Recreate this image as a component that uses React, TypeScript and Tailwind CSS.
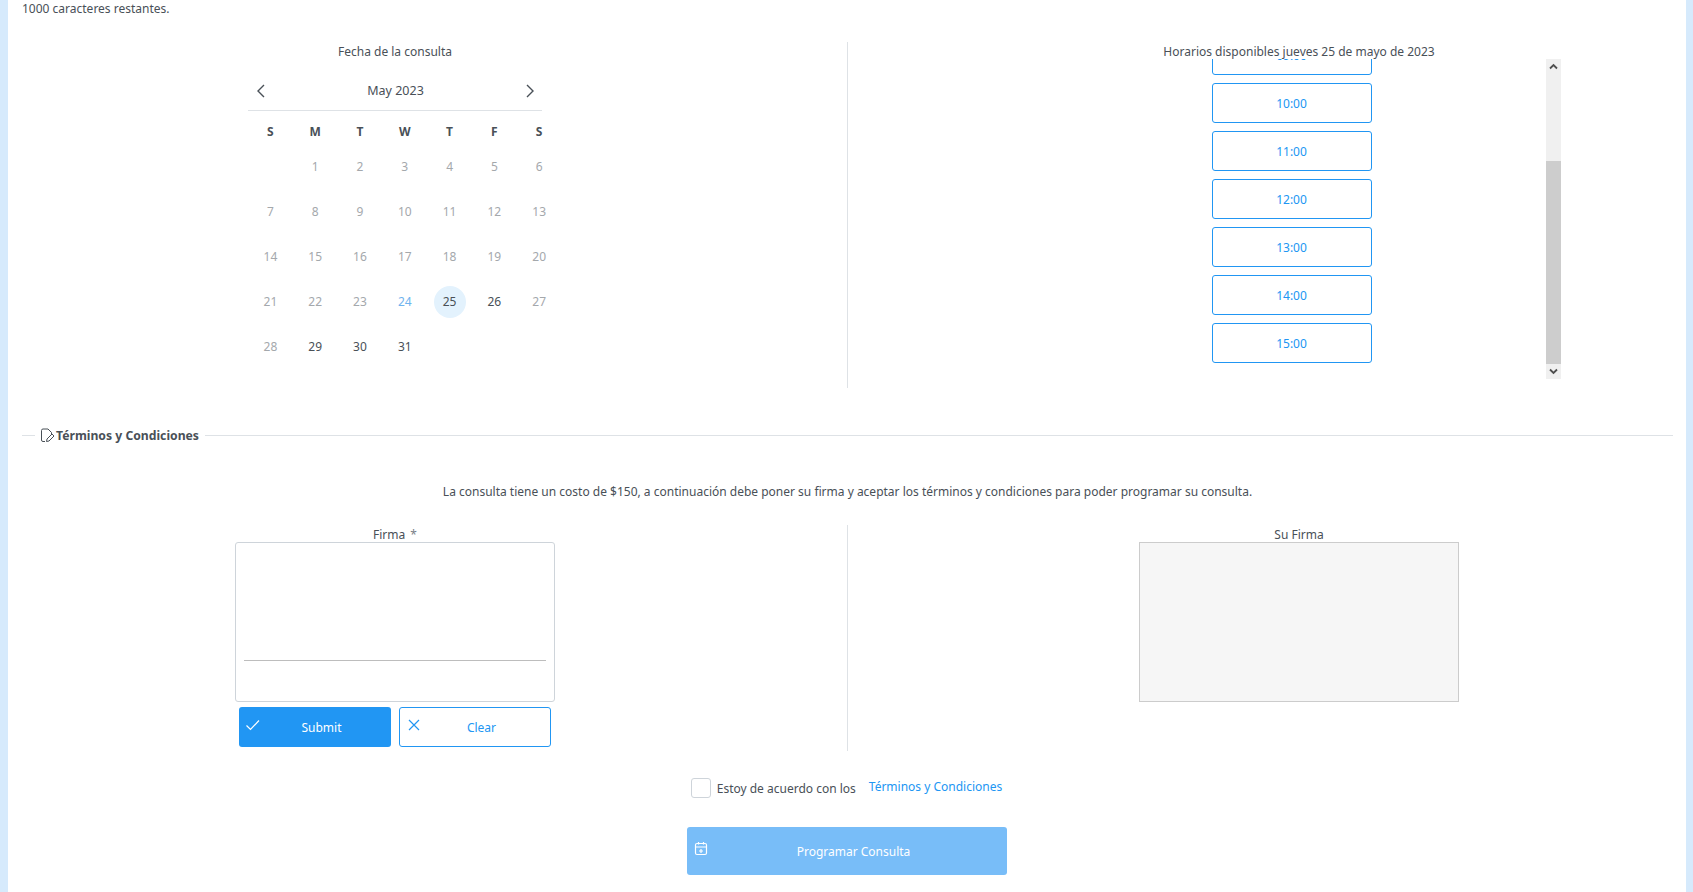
import React from "react";

const WEEK = ["S", "M", "T", "W", "T", "F", "S"];
const ROWS: (number | null)[][] = [
  [null, 1, 2, 3, 4, 5, 6],
  [7, 8, 9, 10, 11, 12, 13],
  [14, 15, 16, 17, 18, 19, 20],
  [21, 22, 23, 24, 25, 26, 27],
  [28, 29, 30, 31, null, null, null],
];

function dayClass(d: number) {
  if (d === 24) return "text-[#6fb3ee]";
  if (d === 25) return "text-[#495057] bg-[#e3f2fd] rounded-full";
  if (d === 26 || d >= 29) return "text-[#495057]";
  return "text-[#a4a8ac]";
}

function Chevron({ dir }: { dir: "left" | "right" }) {
  return (
    <svg width="10" height="14" viewBox="0 0 10 14" fill="none" stroke="#495057" strokeWidth="1.4">
      <path d={dir === "left" ? "M8 1 L2 7 L8 13" : "M2 1 L8 7 L2 13"} />
    </svg>
  );
}

function Calendar() {
  return (
    <div className="w-[294px] mx-auto">
      <div className="flex items-center justify-between h-[46px] pt-[6px] pl-[8px] pr-[7px] border-b border-[#dee2e6] text-[12.5px] text-[#495057]">
        <Chevron dir="left" />
        <span className="pt-[1px]">May 2023</span>
        <Chevron dir="right" />
      </div>
      <div className="grid grid-cols-[repeat(7,44.8px)] w-[314px] mt-[8px] text-[12px] leading-[16px]">
        {WEEK.map((w, i) => (
          <div key={i} className="h-[25px] flex items-center justify-center font-bold text-[#495057]">
            {w}
          </div>
        ))}
        {ROWS.flat().map((d, i) => (
          <div key={i} className="h-[45px] flex items-center justify-center">
            {d !== null && (
              <span className={"w-[32px] h-[32px] flex items-center justify-center " + dayClass(d)}>{d}</span>
            )}
          </div>
        ))}
      </div>
    </div>
  );
}

function Slots() {
  return (
    <div className="w-[524px] h-[320px] mx-auto -mt-[3px] flex overflow-hidden relative">
      <div className="flex-1 flex flex-col items-center gap-[8px] -mt-[24px]">
        {["09:00", "10:00", "11:00", "12:00", "13:00", "14:00", "15:00"].map((t) => (
          <button
            key={t}
            className="w-[160px] h-[40px] shrink-0 pt-[1px] border border-[#2196f3] rounded-[3px] text-[#2196f3] text-[12px] flex items-center justify-center bg-white"
          >
            {t}
          </button>
        ))}
      </div>
      <div className="w-[15px] h-[320px] bg-[#f0f0f0] flex flex-col items-center">
        <div className="h-[15px] flex items-center justify-center">
          <svg width="9" height="7" viewBox="0 0 9 7" fill="none" stroke="#505050" strokeWidth="1.8">
            <path d="M1 5.5 L4.5 2 L8 5.5" />
          </svg>
        </div>
        <div className="h-[87px]" />
        <div className="w-full h-[203px] bg-[#cdcdcd]" />
        <div className="h-[15px] flex items-center justify-center">
          <svg width="9" height="7" viewBox="0 0 9 7" fill="none" stroke="#505050" strokeWidth="1.8">
            <path d="M1 1.5 L4.5 5 L8 1.5" />
          </svg>
        </div>
      </div>
    </div>
  );
}

export default function App() {
  return (
    <div
      className="h-[892px] overflow-hidden flex bg-white text-[#495057] text-[12px]"
      style={{ fontFamily: '"Noto Sans", sans-serif' }}
    >
      <div className="w-[8px] bg-[#d6eafc] shrink-0" />
      <main className="flex-1 pl-[14px] pr-[13px]">
        <div className="h-[18px] leading-[18px]">1000 caracteres restantes.</div>

        <div className="grid grid-cols-[746px_157px_748px] h-[346px] mt-[24px]">
          <section>
            <div className="h-[20px] leading-[20px] text-center">Fecha de la consulta</div>
            <div className="mt-[3px]">
              <Calendar />
            </div>
          </section>
          <div className="flex justify-center pl-[2px]">
            <div className="w-px h-full bg-[#dee2e6]" />
          </div>
          <section>
            <div className="h-[20px] leading-[20px] text-center relative z-10">
              Horarios disponibles jueves 25 de mayo de 2023
            </div>
            <Slots />
          </section>
        </div>

        <div className="flex items-center mt-[37px] h-[20px]">
          <div className="w-[13px] h-px bg-[#dee2e6] mr-[5px]" />
          <svg width="15" height="15" viewBox="0 0 15 15" fill="none" stroke="#495057" strokeWidth="1">
            <path d="M8 1 H3 A1.5 1.5 0 0 0 1.5 2.5 V12 A1.5 1.5 0 0 0 3 13.5 H5" />
            <path d="M8 1 L11.5 4.5 V6" />
            <path d="M6.5 13.5 L7 11 L12 6 L14 8 L9 13 Z" />
          </svg>
          <span className="font-bold text-[12.2px] text-[#495057] ml-[1px] pt-[3px]">Términos y Condiciones</span>
          <div className="flex-1 h-px bg-[#dee2e6] ml-[6px]" />
        </div>

        <p className="text-center mt-[37px] h-[19px] leading-[20px]">
          La consulta tiene un costo de $150, a continuación debe poner su firma y aceptar los términos y condiciones para poder programar su consulta.
        </p>

        <div className="grid grid-cols-[746px_157px_748px] h-[226px] mt-[24px]">
          <section>
            <div className="h-[17px] leading-[19px] text-center">
              Firma <span className="ml-[2px] text-[#7a8188]">*</span>
            </div>
            <div className="w-[320px] mx-auto">
              <div className="h-[160px] border border-[#ced4da] rounded-[3px] flex flex-col justify-end px-[8px] pb-[40px] bg-white">
                <div className="h-px bg-[#bdbdbd]" />
              </div>
              <div className="flex gap-[8px] mt-[5px] px-[4px]">
                <button className="relative w-[152px] h-[40px] pt-[2px] rounded-[3px] bg-[#2196f3] text-white text-[12px]">
                  <svg width="16" height="14" viewBox="0 0 16 14" fill="none" stroke="white" strokeWidth="1.2" className="absolute left-[6px] top-[11px]">
                    <path d="M1.5 7.5 L5.5 11.5 L14 2.5" />
                  </svg>
                  <span className="pl-[13px]">Submit</span>
                </button>
                <button className="relative w-[152px] h-[40px] pt-[2px] rounded-[3px] border border-[#2196f3] text-[#2196f3] text-[12px] bg-white">
                  <svg width="14" height="14" viewBox="0 0 14 14" fill="none" stroke="#2196f3" strokeWidth="1.2" className="absolute left-[7px] top-[10px]">
                    <path d="M2 2 L12 12 M12 2 L2 12" />
                  </svg>
                  <span className="pl-[13px]">Clear</span>
                </button>
              </div>
            </div>
          </section>
          <div className="flex justify-center pl-[2px]">
            <div className="w-px h-full bg-[#dee2e6]" />
          </div>
          <section>
            <div className="h-[17px] leading-[19px] text-center">Su Firma</div>
            <div className="w-[320px] h-[160px] mx-auto border border-[#cccccc] bg-[#f6f6f6]" />
          </section>
        </div>

        <div className="flex items-center justify-center h-[20px] mt-[27px] pr-[2px]">
          <div className="w-[20px] h-[20px] border border-[#ced4da] rounded-[3px] bg-white" />
          <span className="ml-[6px] pt-[2px]">Estoy de acuerdo con los</span>
          <a className="ml-[13px] text-[#2196f3] -mt-[2px]">Términos y Condiciones</a>
        </div>

        <button className="relative block ml-[665px] mt-[29px] w-[320px] h-[48px] rounded-[3px] bg-[#78bdf8] text-white text-[12px]">
          <svg width="14" height="15" viewBox="0 0 14 15" fill="none" stroke="white" strokeWidth="1.2" className="absolute left-[7px] top-[14px]">
            <rect x="1.5" y="2.5" width="11" height="11" rx="1.5" />
            <path d="M1.5 6 H12.5 M4.5 1 V3.5 M9.5 1 V3.5 M7 8 V12 M5 10 H9" />
          </svg>
          <span className="pl-[13px] pt-[1px] inline-block">Programar Consulta</span>
        </button>
      </main>
      <div className="w-[7px] bg-[#d6eafc] shrink-0" />
    </div>
  );
}
